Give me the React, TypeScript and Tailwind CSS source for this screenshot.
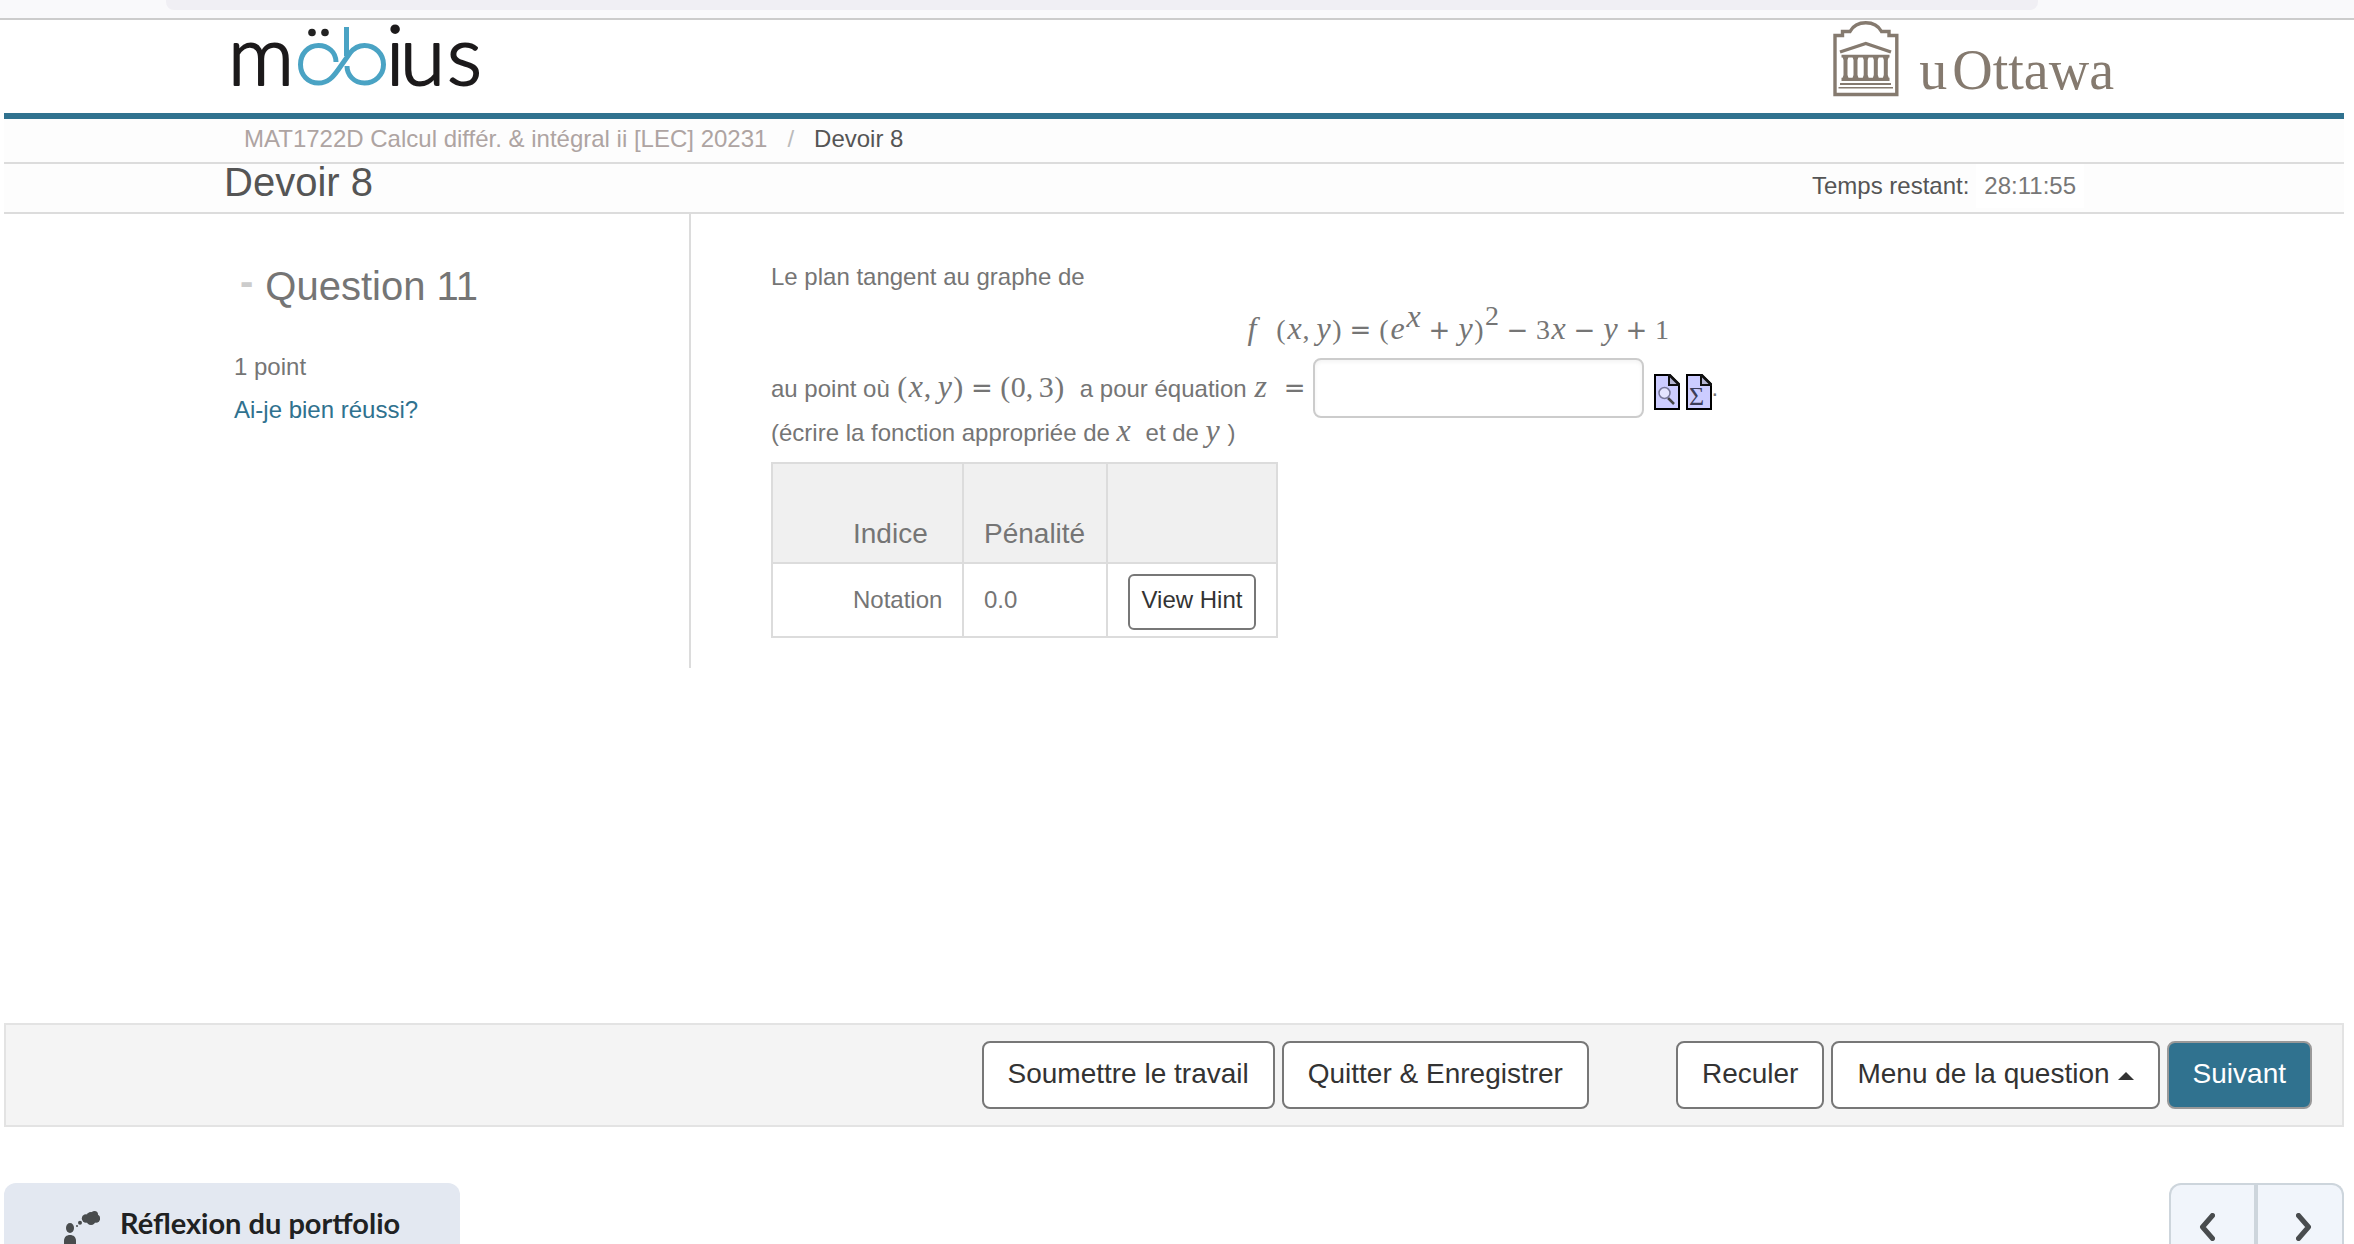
import type { ReactNode } from "react";

const HINTS = [{ name: "Notation", penalty: "0.0" }];

function MobiusLogo() {
  return (
    <svg
      viewBox="230 24 256 68"
      className="w-[256px] h-[68px] mt-1 overflow-visible"
      role="img"
      aria-label="möbius"
      fontFamily="Lato, sans-serif"
      fontWeight="300"
      fontSize="82"
    >
      <g fill="#1c1a1b" stroke="#1c1a1b" strokeWidth="2.2" strokeLinejoin="round">
        <text x="228" y="85">m</text>
        <text x="386" y="85">i</text>
        <text x="400" y="85">u</text>
        <text x="447" y="85">s</text>
      </g>
      <circle cx="312" cy="32.5" r="3.8" fill="#222" />
      <circle cx="325" cy="32.5" r="3.8" fill="#222" />
      <path
        d="M336 62C336 52 328 45.500 318.500 45.500C308 45.500 300.500 54 300.500 64.500C300.500 75 308 83 318.500 83C328 83 333 77 338 70L350 53C354 48 358 45.500 364.500 45.500C375 45.500 383.500 54 383.500 64.500C383.500 75 375 83 364.500 83C354 83 347 75 347 66M346.500 27V56"
        fill="none"
        stroke="#4aa3c4"
        strokeWidth="5"
      />
    </svg>
  );
}

function OttawaLogo() {
  return (
    <div className="flex items-end pt-px text-[#857a6f]">
      <svg viewBox="1834 21 66 76" className="w-[66px] h-[76px]" fill="currentColor" aria-hidden="true">
        <path
          d="M1836 94.500V35.500H1843.500V31.500H1851C1854 26 1860 22.800 1866.800 22.800C1873.500 22.800 1879.500 26 1882.500 31.500H1890V35.500H1897.800V94.500Z"
          fill="none"
          stroke="currentColor"
          strokeWidth="3.4"
        />
        <path d="M1841 52L1866.800 43.500L1892 52" fill="none" stroke="currentColor" strokeWidth="3.4" />
        <path d="M1842.500 54.800H1890.500V57.500H1842.500ZM1842.500 77.800H1890.500V81H1842.500ZM1841 83H1892V85H1841ZM1839.500 87H1894V88.500H1839.500Z" />
        {[1846.5, 1856.5, 1866.7, 1876.8, 1886.8].map((x) => (
          <path key={x} d={`M${x - 3} 57h6l-1 3v15l1 3h-6l1-3v-15z`} />
        ))}
      </svg>
      <span className="pl-5 font-['Liberation_Serif',serif] text-[56px] leading-[54px]">u</span>
      <span className="pl-[5px] font-['Liberation_Serif',serif] text-[56px] leading-[54px]">Ottawa</span>
    </div>
  );
}

function PageIcon({ children }: { children: ReactNode }) {
  return (
    <svg viewBox="0 0 26 36" className="w-[26px] h-9" aria-hidden="true">
      <path d="M1 1H16L25 10V35H1Z" fill="#ccccff" stroke="#000" strokeWidth="2" />
      <path d="M15 1V11H25Z" fill="#b4b4d2" stroke="#111" strokeWidth="2" />
      {children}
    </svg>
  );
}

function PortfolioIcon() {
  return (
    <svg viewBox="64 1210 36 34" className="w-9 h-[34px]" fill="#494c4e" aria-hidden="true">
      <ellipse cx="70" cy="1228" rx="4" ry="5" />
      <path d="M64 1244V1241C64 1237 66.500 1235 70 1235C73.500 1235 76 1237 76 1241V1244Z" />
      <circle cx="77" cy="1226" r="1" />
      <circle cx="80" cy="1222.700" r="2" />
      <circle cx="86" cy="1218.500" r="4.200" />
      <circle cx="91" cy="1216.500" r="4.500" />
      <circle cx="94.500" cy="1214.500" r="3.500" />
      <circle cx="96" cy="1218.500" r="4.200" />
      <circle cx="91" cy="1220.500" r="4.500" />
    </svg>
  );
}

// One symbol of a formula, centred in its own cell
function Sym({ children }: { children: ReactNode }) {
  return <i className="inline-block w-4 text-center text-[32px] leading-none">{children}</i>;
}

function Num({ children }: { children: ReactNode }) {
  return <span className="inline-block w-[15px] text-center">{children}</span>;
}

function Paren({ children }: { children: ReactNode }) {
  return <span className="inline-block w-[11px] text-center">{children}</span>;
}

function Comma() {
  return <span className="inline-block w-[13px] text-left">,</span>;
}

function Op({ children }: { children: ReactNode }) {
  return (
    <span className="inline-block w-9 text-center font-['DejaVu_Sans',sans-serif] text-[26px]">
      {children}
    </span>
  );
}

function BarButton({ children, primary = false }: { children: ReactNode; primary?: boolean }) {
  return (
    <button
      type="button"
      className={
        primary
          ? "flex items-center gap-2 h-[68px] px-6 pb-[2px] rounded-lg border-2 border-[#999] bg-[#30728f] text-[28px] text-white"
          : "flex items-center gap-2 h-[68px] px-6 pb-[2px] rounded-lg border-2 border-[#777] bg-white text-[28px] text-[#333]"
      }
    >
      {children}
    </button>
  );
}

function Header() {
  return (
    <header className="ml-1 mr-[10px]">
      <div className="flex items-start justify-between h-[99px] pl-[226px] pr-[230px] border-b-6 border-[#30728f]">
        <MobiusLogo />
        <OttawaLogo />
      </div>
      <nav className="flex pl-[240px] pb-[3px] leading-[40px] bg-[#fdfdfd] border-b-2 border-[#dcdcdc]">
        <a href="#cours" className="text-[#aea4a2]">
          MAT1722D Calcul différ. &amp; intégral ii [LEC] 20231
        </a>
        <span className="px-5 text-[#bbb]">/</span>
        <span className="text-[#555]">Devoir 8</span>
      </nav>
      <div className="flex justify-between h-[50px] pl-[220px] pr-[260px] bg-[#fdfdfd] border-b-2 border-[#dcdcdc]">
        <h1 className="text-[40px] leading-[36px] text-[#555]">Devoir 8</h1>
        <p className="leading-[44px] text-[#555]">
          Temps restant:
          <span className="inline-block ml-[7px] px-2 bg-white text-[#777]">28:11:55</span>
        </p>
      </div>
    </header>
  );
}

function HintTable() {
  return (
    <table className="table-fixed w-[507px] mt-[14px] border-collapse text-left">
      <thead>
        <tr className="h-[100px] bg-[#f0f0f0] text-[28px] leading-[28px] align-bottom">
          <th className="w-[191px] pl-20 pb-[14px] border-2 border-[#dcdcdc] font-normal">Indice</th>
          <th className="w-[144px] pl-5 pb-[14px] border-2 border-[#dcdcdc] font-normal">Pénalité</th>
          <td className="border-2 border-[#dcdcdc]" />
        </tr>
      </thead>
      <tbody>
        {HINTS.map((hint) => (
          <tr key={hint.name} className="h-[74px]">
            <td className="pl-20 border-2 border-[#dcdcdc]">{hint.name}</td>
            <td className="pl-5 border-2 border-[#dcdcdc]">{hint.penalty}</td>
            <td className="pl-5 pt-1 border-2 border-[#dcdcdc]">
              <button
                type="button"
                className="block w-[128px] h-14 pb-1 rounded-md border-2 border-[#777] bg-white text-[#333]"
              >
                View Hint
              </button>
            </td>
          </tr>
        ))}
      </tbody>
    </table>
  );
}

function Question() {
  return (
    <main className="flex flex-1 items-start pl-[225px] pr-[208px] text-[#757575]">
      <aside className="w-[466px] h-[454px] shrink-0 pl-[9px] pt-12 border-r-2 border-[#dcdcdc]">
        <div className="flex items-start gap-3 pl-[6px] text-[40px] leading-[48px]">
          <button type="button" aria-label="Réduire" className="leading-[38px] font-bold text-[#ccc]">
            -
          </button>
          <h2>Question 11</h2>
        </div>
        <p className="mt-[35px] leading-[43px]">1 point</p>
        <a href="#verifier" className="leading-[43px] text-[#30728f]">
          Ai-je bien réussi?
        </a>
      </aside>

      <section className="flex-1 pl-20 pt-[41px]">
        <p className="leading-[43px]">Le plan tangent au graphe de</p>

        <div className="h-[60px] text-center whitespace-nowrap leading-[64px] font-['Liberation_Serif',serif] text-[28px]">
          <i className="inline-block w-7 text-left text-[32px] leading-none">f</i>
          <Paren>(</Paren>
          <Sym>x</Sym>
          <Comma />
          <Sym>y</Sym>
          <Paren>)</Paren>
          <Op>=</Op>
          <Paren>(</Paren>
          <Sym>e</Sym>
          <sup className="-top-3 text-[28px]">
            <Sym>x</Sym>
          </sup>
          <Op>+</Op>
          <Sym>y</Sym>
          <Paren>)</Paren>
          <sup className="-top-[14px] text-[28px]">
            <Num>2</Num>
          </sup>
          <Op>−</Op>
          <Num>3</Num>
          <Sym>x</Sym>
          <Op>−</Op>
          <Sym>y</Sym>
          <Op>+</Op>
          <Num>1</Num>
        </div>

        <div className="flex items-center h-[60px] leading-[60px] whitespace-nowrap">
          <label htmlFor="reponse" className="flex items-baseline">
            au point où
            <span className="pl-[7px] pr-[15px] font-['Liberation_Serif',serif] text-[30px]">
              <Paren>(</Paren>
              <Sym>x</Sym>
              <Comma />
              <Sym>y</Sym>
              <Paren>)</Paren>
              <Op>=</Op>
              <Paren>(</Paren>
              <Num>0</Num>
              <Comma />
              <Num>3</Num>
              <Paren>)</Paren>
            </span>
            a pour équation
            <span className="pl-2 font-['Liberation_Serif',serif] text-[30px]">
              <i className="inline-block w-[22px] text-[32px] leading-none">z</i>
              <Op>=</Op>
            </span>
          </label>
          <input
            id="reponse"
            type="text"
            className="w-[331px] h-[60px] px-3 rounded-lg border-2 border-[#ccc] bg-white inset-shadow-sm"
          />
          <button type="button" aria-label="Aperçu" className="ml-[10px] mt-2">
            <PageIcon>
              <path d="M14 24L20 30" stroke="#444" strokeWidth="2.500" />
              <circle cx="10.500" cy="19" r="5.500" fill="#e4e4ff" stroke="#77779a" strokeWidth="1.500" />
            </PageIcon>
          </button>
          <button type="button" aria-label="Éditeur d'équation" className="ml-[6px] mt-2">
            <PageIcon>
              <text x="3" y="31" fontSize="26" fill="#3c3c58" fontFamily="Liberation Serif, serif">
                Σ
              </text>
            </PageIcon>
          </button>
          <span>.</span>
        </div>

        <p className="h-[30px] leading-[30px]">
          (écrire la fonction appropriée de{" "}
          <i className="inline-block w-[29px] font-['Liberation_Serif',serif] text-[32px] leading-[24px]">x</i>
          et de{" "}
          <i className="inline-block w-[22px] font-['Liberation_Serif',serif] text-[32px] leading-[24px]">y</i>)
        </p>

        <HintTable />
      </section>
    </main>
  );
}

export default function App() {
  return (
    <div className="flex flex-col h-screen overflow-hidden bg-white font-['Liberation_Sans',sans-serif] text-[24px]">
      <div className="h-5 shrink-0 pl-[166px] pr-[316px] bg-[#f9f9fb] border-b-2 border-[#ccc]">
        <div className="h-[10px] rounded-b-lg bg-[#f0eff4]" />
      </div>

      <Header />
      <Question />

      <div className="flex shrink-0 justify-end gap-[7px] ml-1 mr-[10px] py-4 pr-[30px] bg-[#f4f4f4] border-2 border-[#e3e3e3]">
        <BarButton>Soumettre le travail</BarButton>
        <BarButton>Quitter &amp; Enregistrer</BarButton>
        <div className="w-[73px]" />
        <BarButton>Reculer</BarButton>
        <BarButton>
          Menu de la question
          <svg viewBox="0 0 16 8" className="w-4 h-2 mt-1" fill="#333" aria-hidden="true">
            <path d="M0 8L8 0L16 8Z" />
          </svg>
        </BarButton>
        <BarButton primary>Suivant</BarButton>
      </div>

      <footer className="flex shrink-0 items-start justify-between h-[61px] mt-14 ml-1 mr-[10px]">
        <button
          type="button"
          className="flex items-end w-[456px] h-full pl-[60px] gap-5 rounded-t-xl bg-[#e3e8f1] font-[Lato,sans-serif] text-[29px] font-bold text-[#202122]"
        >
          <PortfolioIcon />
          <span className="leading-[42px]">Réflexion du portfolio</span>
        </button>
        <div className="flex h-full rounded-t-xl border-2 border-b-0 border-[#cdd5dc] bg-[#f1f5fb]">
          <button
            type="button"
            aria-label="Précédent"
            className="flex items-start w-[87px] pl-7 pt-7 border-r-4 border-[#cdd5dc]"
          >
            <svg viewBox="0 0 16 28" className="w-4 h-7" fill="none" stroke="#494c4e" strokeWidth="5" aria-hidden="true">
              <path d="M13.500 2.500L3.500 14L13.500 25.500" strokeLinecap="round" strokeLinejoin="round" />
            </svg>
          </button>
          <button type="button" aria-label="Suivant" className="flex items-start w-[84px] pl-[38px] pt-7">
            <svg viewBox="0 0 16 28" className="w-4 h-7" fill="none" stroke="#494c4e" strokeWidth="5" aria-hidden="true">
              <path d="M2.500 2.500L12.500 14L2.500 25.500" strokeLinecap="round" strokeLinejoin="round" />
            </svg>
          </button>
        </div>
      </footer>
    </div>
  );
}
